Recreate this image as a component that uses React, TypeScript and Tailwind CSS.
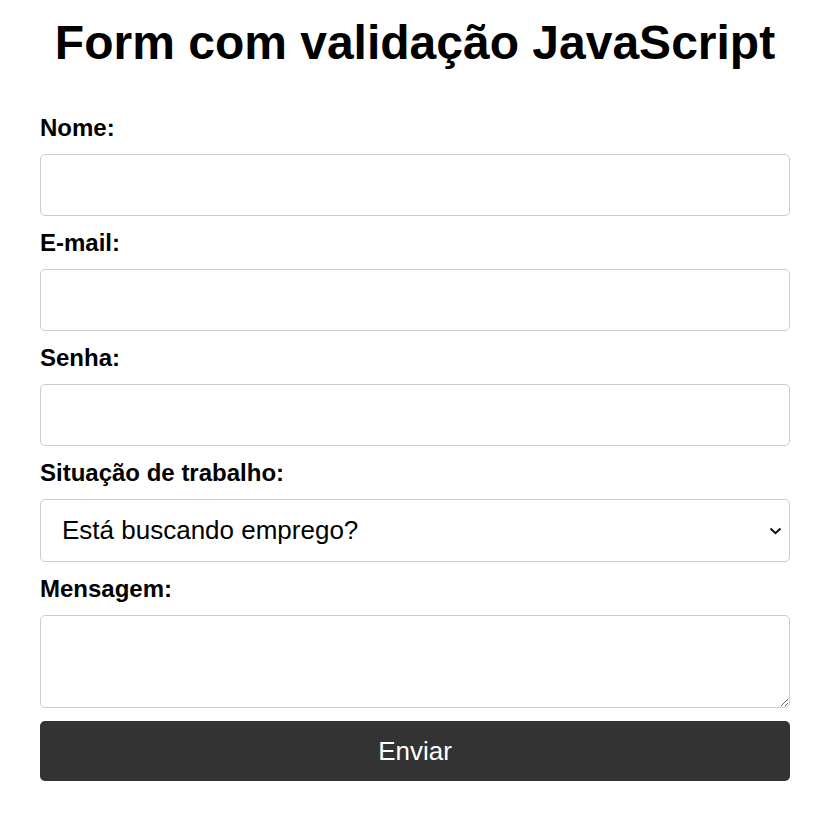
export default function App() {
  const field =
    "block h-[62px] w-full rounded-[5px] border border-[#ccc] bg-white px-[17px] text-[26px] outline-none";
  const label = "block text-2xl leading-[28px] font-bold";

  return (
    <div className="min-h-screen bg-white font-['Liberation_Sans',Arial,sans-serif] text-black">
      <div className="ml-[40px] w-[750px] pt-[15px]">
        <h1 className="text-center text-[48px] leading-[55px] font-bold">
          Form com validação JavaScript
        </h1>

        <form className="mt-[44px]" onSubmit={(e) => e.preventDefault()}>
          <label className={`${label} mb-3`}>Nome:</label>
          <input type="text" className={field} />

          <label className={`${label} mt-[13px] mb-3`}>E-mail:</label>
          <input type="email" className={field} />

          <label className={`${label} mt-[13px] mb-3`}>Senha:</label>
          <input type="password" className={field} />

          <label className={`${label} mt-[13px] mb-3`}>
            Situação de trabalho:
          </label>
          <div className="relative">
            <select className="block h-[63px] w-full appearance-none rounded-[5px] border border-[#ccc] bg-white pr-10 pl-[21px] text-[26px] outline-none">
              <option>Está buscando emprego?</option>
              <option>Sim</option>
              <option>Não</option>
            </select>
            <svg
              className="pointer-events-none absolute top-[28px] right-[8px]"
              width="13"
              height="8"
              viewBox="0 0 13 8"
              fill="none"
            >
              <path d="M1.5 1.5 6.5 6.2 11.5 1.5" stroke="#111" strokeWidth="2" />
            </svg>
          </div>

          <label className={`${label} mt-[13px] mb-3`}>Mensagem:</label>
          <textarea className="block h-[93px] w-full rounded-[5px] border border-[#ccc] bg-white px-[17px] py-4 text-[26px] outline-none" />

          <button
            type="submit"
            className="mt-[13px] block h-[60px] w-full rounded-[5px] bg-[#333] text-[26px] text-white"
          >
            Enviar
          </button>
        </form>
      </div>
    </div>
  );
}
